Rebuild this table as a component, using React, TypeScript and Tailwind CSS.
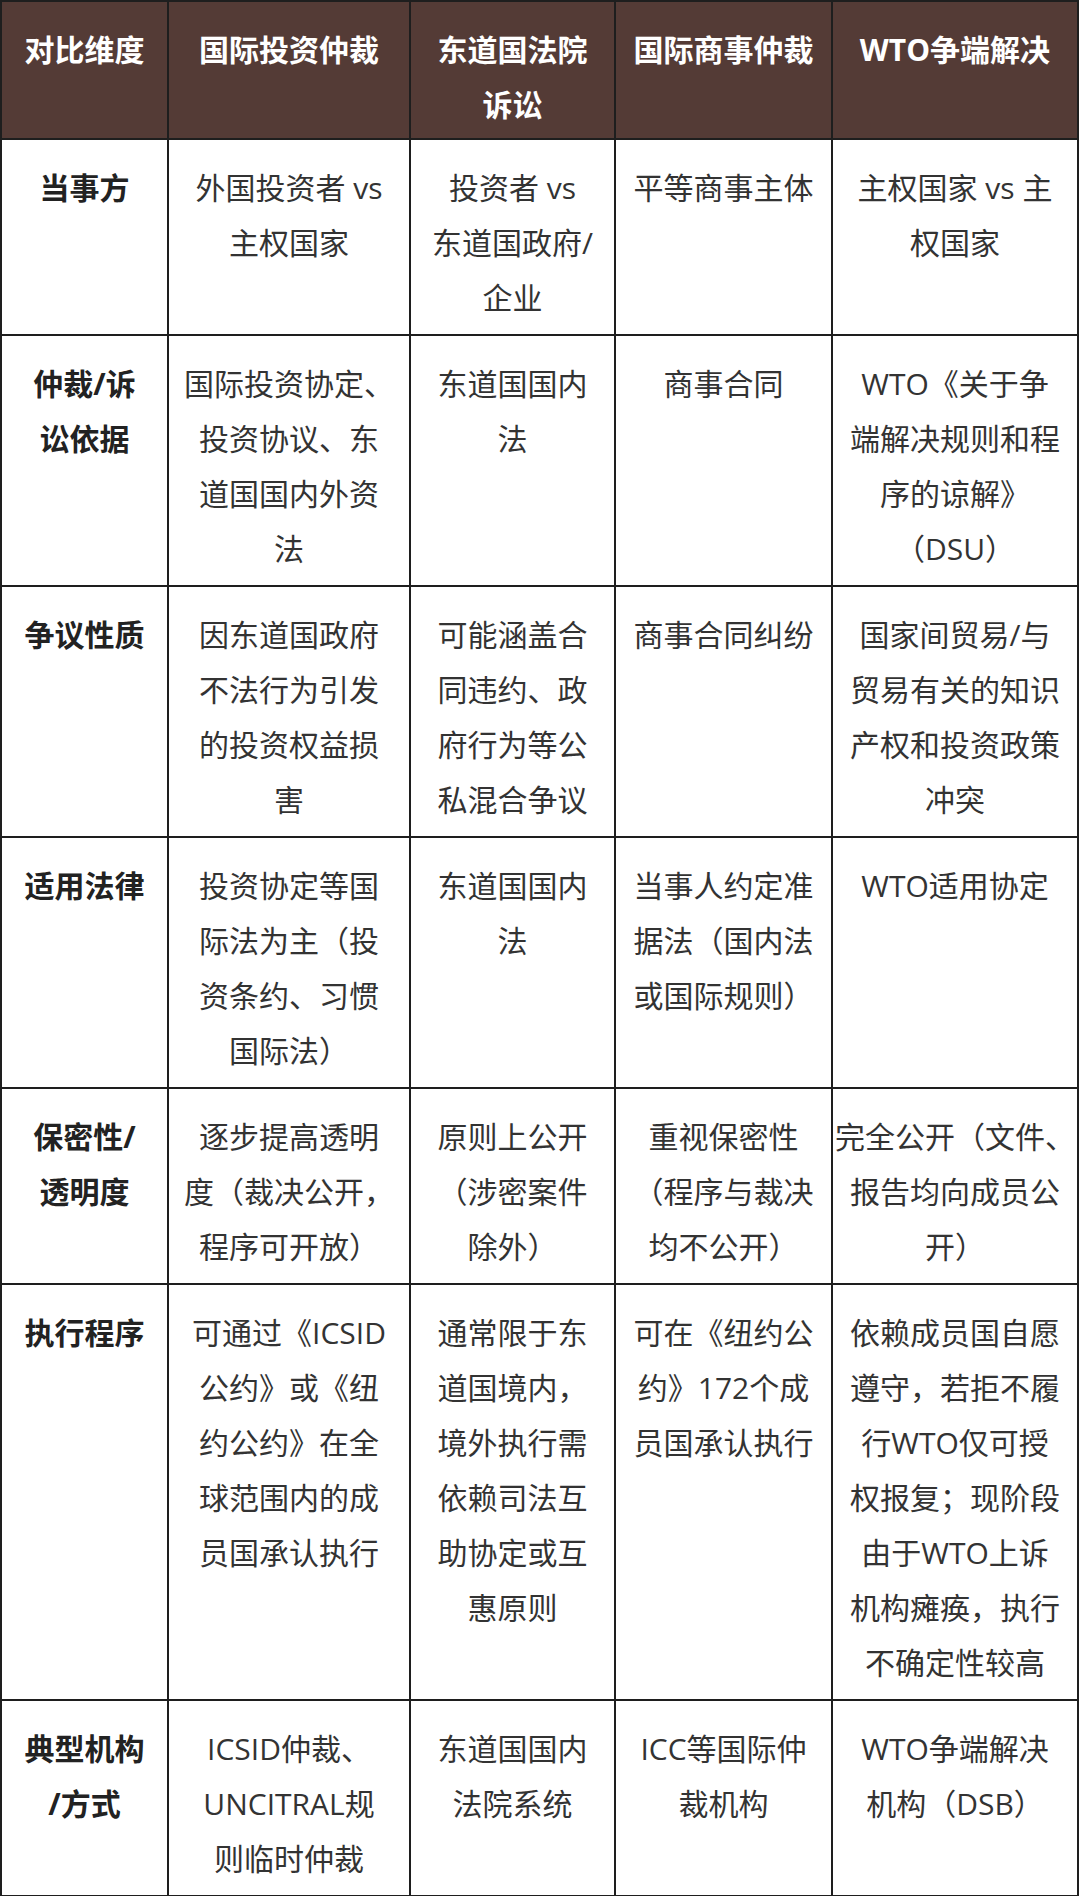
const font = {
  fontFamily: '"Open Sans", "Noto Sans CJK SC", sans-serif',
};

type Row = {
  label: string[];
  cells: string[][];
};

const header: string[][] = [
  ["对比维度"],
  ["国际投资仲裁"],
  ["东道国法院", "诉讼"],
  ["国际商事仲裁"],
  ["WTO争端解决"],
];

const rows: Row[] = [
  {
    label: ["当事方"],
    cells: [
      ["外国投资者 vs", "主权国家"],
      ["投资者 vs", "东道国政府/", "企业"],
      ["平等商事主体"],
      ["主权国家 vs 主", "权国家"],
    ],
  },
  {
    label: ["仲裁/诉", "讼依据"],
    cells: [
      ["国际投资协定、", "投资协议、东", "道国国内外资", "法"],
      ["东道国国内", "法"],
      ["商事合同"],
      ["WTO《关于争", "端解决规则和程", "序的谅解》", "（DSU）"],
    ],
  },
  {
    label: ["争议性质"],
    cells: [
      ["因东道国政府", "不法行为引发", "的投资权益损", "害"],
      ["可能涵盖合", "同违约、政", "府行为等公", "私混合争议"],
      ["商事合同纠纷"],
      ["国家间贸易/与", "贸易有关的知识", "产权和投资政策", "冲突"],
    ],
  },
  {
    label: ["适用法律"],
    cells: [
      ["投资协定等国", "际法为主（投", "资条约、习惯", "国际法）"],
      ["东道国国内", "法"],
      ["当事人约定准", "据法（国内法", "或国际规则）"],
      ["WTO适用协定"],
    ],
  },
  {
    label: ["保密性/", "透明度"],
    cells: [
      ["逐步提高透明", "度（裁决公开，", "程序可开放）"],
      ["原则上公开", "（涉密案件", "除外）"],
      ["重视保密性", "（程序与裁决", "均不公开）"],
      ["完全公开（文件、", "报告均向成员公", "开）"],
    ],
  },
  {
    label: ["执行程序"],
    cells: [
      ["可通过《ICSID", "公约》或《纽", "约公约》在全", "球范围内的成", "员国承认执行"],
      ["通常限于东", "道国境内，", "境外执行需", "依赖司法互", "助协定或互", "惠原则"],
      ["可在《纽约公", "约》172个成", "员国承认执行"],
      [
        "依赖成员国自愿",
        "遵守，若拒不履",
        "行WTO仅可授",
        "权报复；现阶段",
        "由于WTO上诉",
        "机构瘫痪，执行",
        "不确定性较高",
      ],
    ],
  },
  {
    label: ["典型机构", "/方式"],
    cells: [
      ["ICSID仲裁、", "UNCITRAL规", "则临时仲裁"],
      ["东道国国内", "法院系统"],
      ["ICC等国际仲", "裁机构"],
      ["WTO争端解决", "机构（DSB）"],
    ],
  },
];

function Lines({ lines }: { lines: string[] }) {
  return (
    <>
      {lines.map((line, i) => (
        <div key={i} className="whitespace-nowrap">
          {line}
        </div>
      ))}
    </>
  );
}

export default function App() {
  return (
    <div className="min-h-[1896px] w-[1080px] bg-white" style={font}>
      <table className="w-[1077px] table-fixed border-collapse text-center text-[30px] leading-[55px]">
        <colgroup>
          <col className="w-[167px]" />
          <col className="w-[242px]" />
          <col className="w-[205px]" />
          <col className="w-[217px]" />
          <col className="w-[246px]" />
        </colgroup>
        <thead>
          <tr className="bg-[#543b36]">
            {header.map((h, i) => (
              <th
                key={i}
                className="border-2 border-[#1e1e1e] px-0.5 pt-[20px] pb-[6px] align-top font-bold text-white"
              >
                <Lines lines={h} />
              </th>
            ))}
          </tr>
        </thead>
        <tbody>
          {rows.map((row, r) => (
            <tr key={r}>
              <td className="border-2 border-[#1e1e1e] px-0.5 pt-[20px] pb-[9px] align-top font-bold text-[#222]">
                <Lines lines={row.label} />
              </td>
              {row.cells.map((cell, c) => (
                <td
                  key={c}
                  className="border-2 border-[#1e1e1e] px-0.5 pt-[20px] pb-[9px] align-top text-[#333]"
                >
                  <Lines lines={cell} />
                </td>
              ))}
            </tr>
          ))}
        </tbody>
      </table>
    </div>
  );
}
